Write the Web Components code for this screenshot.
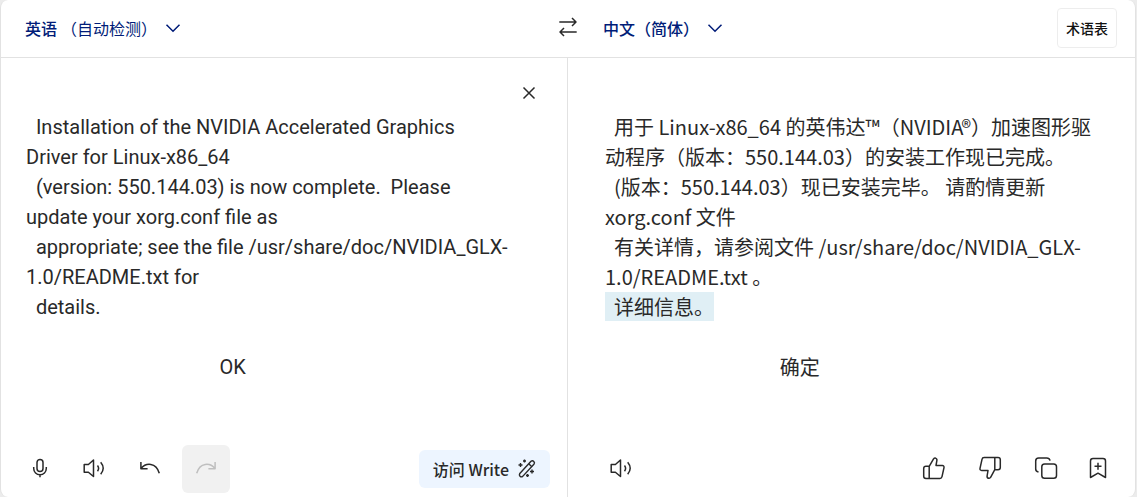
<!DOCTYPE html>
<html lang="zh-CN">
<head>
<meta charset="utf-8">
<meta name="viewport" content="width=device-width, initial-scale=1">
<title>翻译</title>
<style>
  body { margin: 0; padding-right: 1px; background: #ececec; color: #292929; font-family: Roboto, "Noto Sans CJK SC", sans-serif; }
</style>
</head>
<body>
<translator-app></translator-app>

<template id="t-app">
  <style>
    :host { display: flex; flex-direction: column; box-sizing: border-box; min-height: 100vh; background: #fff; border: solid #e2e2e2; border-width: 0 1px; border-radius: 8px; overflow: hidden; }
    header { display: grid; grid-template-columns: 1fr 48px 1fr; align-items: center; height: 56px; padding-bottom: 1px; border-bottom: 1px solid #e2e2e2; }
    .from { padding-left: 24px; }
    .to { display: flex; align-items: center; justify-content: space-between; padding: 0 18px 0 11px; }
    main { flex: 1; display: grid; grid-template-columns: 1fr 1fr; }
    source-pane { border-right: 1px solid #e2e2e2; }
    .glossary { height: 40px; padding: 0 8px; border: 1px solid #ededed; border-radius: 4px; background: #fff; color: #111; font: 500 14px/20px "Noto Sans CJK SC", sans-serif; }
  </style>
  <header>
    <div class="from"><language-picker>英语<span slot="note">（自动检测）</span></language-picker></div>
    <icon-button icon="swap" label="交换语言"></icon-button>
    <div class="to">
      <language-picker>中文（简体）</language-picker>
      <button class="glossary" type="button">术语表</button>
    </div>
  </header>
  <main>
    <source-pane></source-pane>
    <target-pane></target-pane>
  </main>
</template>

<template id="t-picker">
  <style>
    :host { display: block; }
    button { display: flex; align-items: center; padding: 0; border: 0; background: none; color: #001c78; font: 500 16px/24px "Noto Sans CJK SC", sans-serif; }
    .note { font-weight: 400; margin-left: 4px; }
    .note.empty { display: none; }
    svg { margin-left: 8px; }
  </style>
  <button type="button" aria-haspopup="listbox">
    <slot></slot><span class="note"><slot name="note"></slot></span>
    <svg width="16" height="16" viewBox="0 0 16 16" fill="none" stroke="currentColor" stroke-width="1.5" aria-hidden="true"><path d="M1.5 4.700 8 11.300l6.500-6.600"/></svg>
  </button>
</template>

<template id="t-icon-button">
  <style>
    :host { display: block; width: 48px; }
    button { display: grid; place-items: center; width: 100%; height: 48px; padding: 0 0 2px; border: 0; border-radius: 6px; background: none; color: #292929; }
    button:disabled { background: #f1f1f1; color: #bfbfbf; }
    svg { fill: none; stroke: currentColor; stroke-width: 1.5; stroke-linejoin: round; }
  </style>
  <button type="button"><svg width="24" height="24" viewBox="0 0 24 24" aria-hidden="true"></svg></button>
</template>

<template id="t-source">
  <style>
    :host { display: flex; flex-direction: column; justify-content: space-between; min-width: 0; }
    .edit { display: grid; position: relative; padding: 54px 57px 0 25px; }
    .edit icon-button { position: absolute; top: 12px; right: 14px; }
    textarea { display: block; box-sizing: border-box; width: 100%; height: 270px; margin: 0; padding: 0; border: 0; outline: 0; resize: none; overflow: hidden; background: none; color: #292929; font: 20px/30px Roboto, sans-serif; }
    .bar { display: flex; align-items: center; gap: 8px; padding: 0 17px 4px 13px; }
    .write { display: flex; align-items: center; gap: 8px; height: 38px; margin-left: auto; padding: 0 13px 0 14px; border-radius: 6px; background: #edf5ff; color: #292929; text-decoration: none; font: 500 16px/24px "Noto Sans CJK SC", sans-serif; }
  </style>
  <div class="edit">
    <textarea aria-label="原文" spellcheck="false">  Installation of the NVIDIA Accelerated Graphics Driver for Linux-x86_64
  (version: 550.144.03) is now complete.  Please update your xorg.conf file as
  appropriate; see the file /usr/share/doc/NVIDIA_GLX-1.0/README.txt for
  details.

                                       OK</textarea>
    <icon-button icon="close" label="清除"></icon-button>
  </div>
  <div class="bar">
    <icon-button icon="mic" label="语音输入"></icon-button>
    <icon-button icon="speaker" label="朗读原文"></icon-button>
    <icon-button icon="undo" label="撤销"></icon-button>
    <icon-button icon="redo" label="重做" disabled></icon-button>
    <a class="write" href="#write">访问 Write
      <svg width="20" height="20" viewBox="0 0 20 20" fill="none" stroke="currentColor" stroke-width="1.400" stroke-linejoin="round" aria-hidden="true"><path d="M2.800 14.500 14 2.300q1.500-1.200 2.800.1t.1 2.800L5.700 17.400q-1.500 1-2.700-.2t-.2-2.700ZM11.800 4.700l2.700 2.700M7.500.5v3M6 2h3M3.500 4v4M1.500 6h4M15 10.500v4M13 12.500h4M10.500 15v3M9 16.500h3"/></svg>
    </a>
  </div>
</template>

<template id="t-target">
  <style>
    :host { display: flex; flex-direction: column; justify-content: space-between; min-width: 0; }
    .text { padding: 54px 40px 0 37px; white-space: pre-wrap; font: 20px/30px "Noto Sans CJK SC", sans-serif; }
    mark { background: #e0eff5; color: inherit; }
    .bar { display: flex; align-items: center; gap: 8px; padding: 0 17px 4px 29px; }
    .push { margin-left: auto; }
    .narrow { width: 40px; }
  </style>
  <div class="text">  用于 Linux-x86_64 的英伟达™（NVIDIA®）加速图形驱动程序（版本：550.144.03）的安装工作现已完成。
  (版本：550.144.03）现已安装完毕。 请酌情更新 xorg.conf 文件
  有关详情，请参阅文件 /usr/share/doc/NVIDIA_GLX-1.0/README.txt 。
<mark>  详细信息。</mark>

                                       确定</div>
  <div class="bar">
    <icon-button icon="speaker" label="朗读译文"></icon-button>
    <icon-button class="push" icon="up" label="译文不错"></icon-button>
    <icon-button icon="down" label="译文不佳"></icon-button>
    <icon-button icon="copy" label="复制"></icon-button>
    <icon-button class="narrow" icon="save" label="保存"></icon-button>
  </div>
</template>

<script>
  const ICONS = {
    swap: '<path d="M3.300 7h16.500M16 3l4 4-4 4M20.700 17H4.200M8 13l-4 4 4 4"/>',
    close: '<path d="m6.500 6.500 11 11m0-11-11 11"/>',
    mic: '<rect x="11" y="3.500" width="6" height="12" rx="3"/><path d="M7.700 11v1.500a6.300 6.300 0 0 0 12.600 0V11M14 18.800v2.500"/>',
    speaker: '<path d="M2.200 8.500h4.200L11.500 4v16.500l-5.100-4.300H2.200ZM15.500 9.500q2.200 2.800 0 5.700M18.700 6.200q5 6 0 12"/>',
    undo: '<path d="M2.900 6v6.800h6.700M3 12.500C8 6.500 18 6.200 21.300 17.200"/>',
    redo: '<path d="M21.100 6v6.800h-6.700M21 12.500C16 6.500 6 6.200 2.700 17.200"/>',
    up: '<path d="M7.200 10.300 11.400 3.200q.6-1.400 2-1.100 1.800.5 1.500 2.300L14 9.500h6.300q2 .2 1.700 2.100l-2 9q-.4 1.900-2.100 1.900H4q-2.300 0-2.300-2.200v-7.800q0-2.200 2.300-2.200ZM7.200 10.300v12.200"/>',
    down: '<path d="M16.800 13.700 12.600 21.300q-.6 1.300-2 1-1.800-.5-1.500-2.300L10 14.500H3.700q-2-.2-1.700-2.100l2-9q.4-1.900 2.100-1.900H20q2.300 0 2.300 2.200v7.800q0 2.200-2.300 2.200ZM16.800 13.700V1.500"/>',
    copy: '<rect x="7.800" y="8" width="14.700" height="14.300" rx="2.800"/><path d="M4.500 16Q1.700 15.500 1.700 13V5q0-3 3-3h8q2.700 0 3.400 2.600"/>',
    save: '<path d="M4.500 21.500V5q0-2.500 2.500-2.500h10q2.500 0 2.500 2.500v16.500L12 17.200ZM12 6.700v7M8.500 10.200h7"/>'
  };

  class TemplateElement extends HTMLElement {
    constructor() {
      super();
      const template = document.getElementById(this.constructor.template);
      this.attachShadow({ mode: 'open' }).append(document.importNode(template.content, true));
    }
  }

  class LanguagePicker extends TemplateElement {
    static template = 't-picker';
    connectedCallback() {
      const note = this.shadowRoot.querySelector('.note');
      note.classList.toggle('empty', !this.querySelector('[slot=note]'));
    }
  }

  class IconButton extends TemplateElement {
    static template = 't-icon-button';
    connectedCallback() {
      const button = this.shadowRoot.querySelector('button');
      button.disabled = this.hasAttribute('disabled');
      button.setAttribute('aria-label', this.getAttribute('label'));
      button.firstElementChild.innerHTML = ICONS[this.getAttribute('icon')];
    }
  }

  class SourcePane extends TemplateElement { static template = 't-source'; }
  class TargetPane extends TemplateElement { static template = 't-target'; }
  class TranslatorApp extends TemplateElement { static template = 't-app'; }

  customElements.define('icon-button', IconButton);
  customElements.define('language-picker', LanguagePicker);
  customElements.define('source-pane', SourcePane);
  customElements.define('target-pane', TargetPane);
  customElements.define('translator-app', TranslatorApp);
</script>
</body>
</html>
